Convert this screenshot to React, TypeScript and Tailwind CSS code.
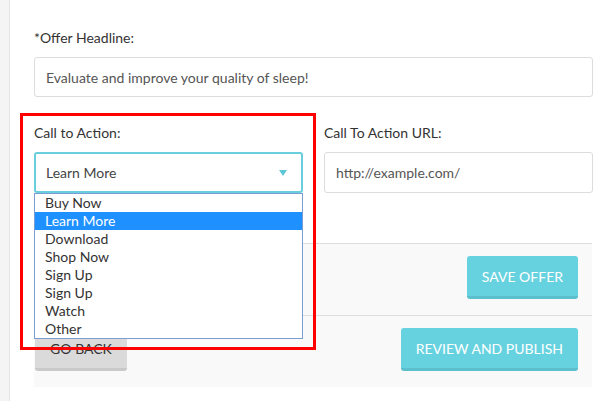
import React from 'react';

const options = ['Buy Now', 'Learn More', 'Download', 'Shop Now', 'Sign Up', 'Sign Up', 'Watch', 'Other'];

export default function App() {
  const selected = 1;

  return (
    <div className="flex min-h-[401px] bg-white font-['Lato','Liberation_Sans',sans-serif] text-[14px] text-[#333]">
      {/* left rail */}
      <div className="w-[10px] shrink-0 bg-[#f4f4f4] border-r border-[#e4e4e4]" />

      <div className="relative flex-1 pl-[24px] pr-[12px] pt-[28px]">
        {/* headline */}
        <label className="block leading-[20px] mb-[9px]">*Offer Headline:</label>
        <div className="h-[40px] flex items-center px-[11px] border border-[#dcdcdc] rounded-[3px] text-[#555]">
          Evaluate and improve your quality of sleep!
        </div>

        {/* call to action row */}
        <div className="mt-[26px] grid grid-cols-2 gap-[21px]">
          <div>
            <label className="block leading-[20px] mb-[9px]">Call to Action:</label>
            <div className="relative">
              <div className="h-[41px] flex items-center justify-between pl-[10px] pr-[14px] border-2 border-[#6acfdc] rounded-[3px] text-[#444]">
                <span>Learn More</span>
                <svg width="8" height="6" viewBox="0 0 8 6">
                  <polygon points="0,0 8,0 4,6" fill="#5ec7d5" />
                </svg>
              </div>
              {/* open dropdown */}
              <ul className="absolute left-0 top-full z-10 w-full bg-white border border-[#7b9dd6]">
                {options.map((opt, i) => (
                  <li
                    key={i}
                    className={
                      'h-[18px] leading-[18px] pl-[10px] ' +
                      (i === selected ? 'bg-[#1e90ff] text-white' : 'text-[#333]')
                    }
                  >
                    {opt}
                  </li>
                ))}
              </ul>
            </div>
          </div>
          <div>
            <label className="block leading-[20px] mb-[9px]">Call To Action URL:</label>
            <div className="h-[41px] flex items-center px-[11px] border border-[#dcdcdc] rounded-[3px] text-[#555]">
              http://example.com/
            </div>
          </div>
        </div>

        {/* actions panel */}
        <div className="mt-[50px] mr-[1px] bg-[#f9f9f9] border-t border-[#dedede]">
          <div className="flex justify-end pt-[12px] pb-[16px] pr-[14px] border-b border-[#dedede]">
            <button className="h-[43px] px-[15px] rounded-[3px] bg-[#67d2df] border-b-[3px] border-[#5bbfcc] text-white uppercase">
              Save Offer
            </button>
          </div>
          <div className="flex justify-between pt-[12px] pb-[16px] pl-[1px] pr-[14px]">
            <button className="h-[43px] w-[92px] rounded-[3px] bg-[#dadada] border-b-[3px] border-[#c9c9c9] text-[#333] uppercase">
              Go Back
            </button>
            <button className="h-[43px] px-[15px] rounded-[3px] bg-[#67d2df] border-b-[3px] border-[#5bbfcc] text-white uppercase">
              Review and Publish
            </button>
          </div>
        </div>

        {/* annotation highlight */}
        <div className="pointer-events-none absolute left-[10px] top-[113px] z-20 w-[296px] h-[237px] border-[3px] border-[#ff0000]" />
      </div>
    </div>
  );
}
